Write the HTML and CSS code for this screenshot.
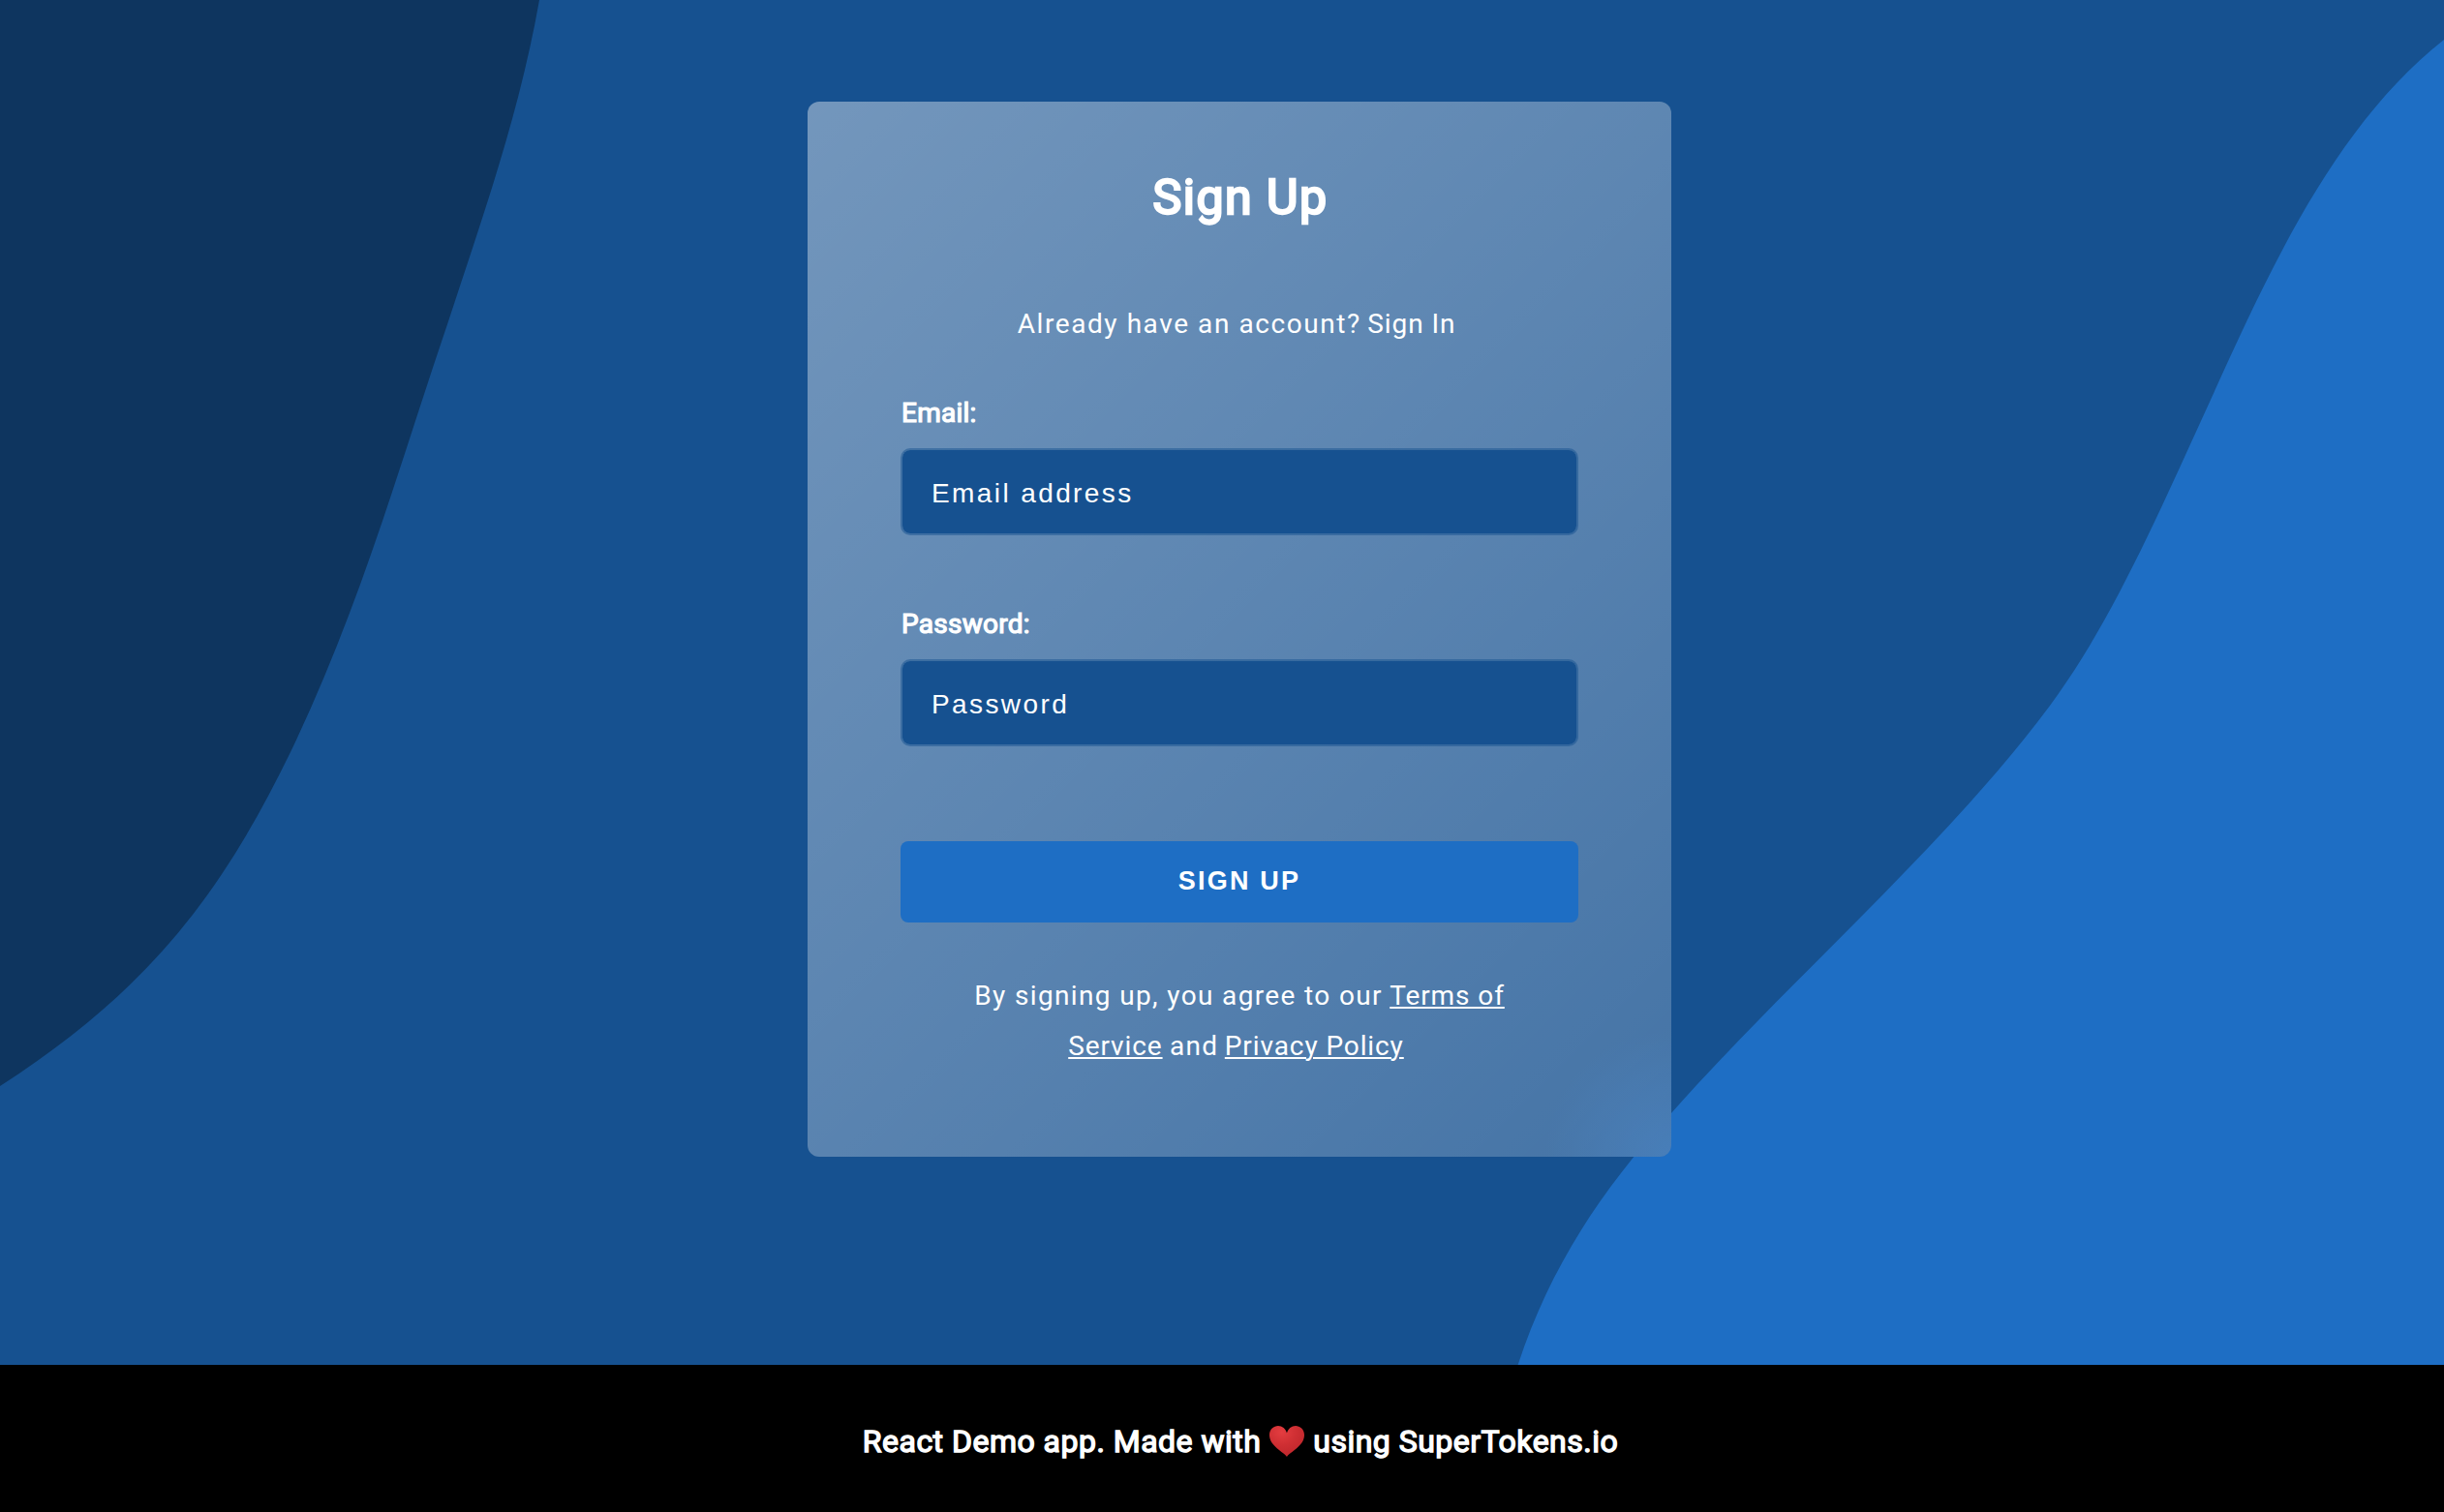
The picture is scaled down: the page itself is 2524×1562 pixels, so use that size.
FILE: index.html
```html
<!DOCTYPE html>
<html lang="en">
<head>
<meta charset="utf-8">
<title>Sign Up</title>
<link rel="stylesheet" href="styles.css">
</head>
<body>
<div class="page">
  <main class="stage">
    <svg class="waves" viewBox="0 0 2524 1410" aria-hidden="true">
      <path class="wave-dark" d="M0 0H557C536 118 502 213 463 332C412 482 372 627 300 777C224 934 145 1028 0 1122Z"/>
      <path class="wave-light" d="M2524 41C2398 140 2328 316 2262 459C2216 560 2172 655 2117 729C2010 873 1850 1010 1726 1150C1650 1234 1600 1312 1567.6 1410H2524Z"/>
    </svg>
    <form class="card">
      <h1 class="title">Sign Up</h1>
      <p class="switch">Already have an account? <a class="link plain">Sign In</a></p>
      <label class="label" for="email">Email:</label>
      <input class="input" id="email" type="email" placeholder="Email address">
      <label class="label" for="password">Password:</label>
      <input class="input" id="password" type="password" placeholder="Password">
      <button class="submit" type="button">SIGN UP</button>
      <p class="terms">By signing up, you agree to our <a class="link">Terms of</a><br><a class="link">Service</a> <span class="and">and</span> <a class="link last">Privacy Policy</a></p>
    </form>
  </main>
  <footer class="footer">
    <span class="made">React Demo app. Made with</span>
    <svg class="heart" viewBox="0 0 36 32" aria-hidden="true">
      <defs>
        <radialGradient id="heart-fill" cx="0.35" cy="0.2" r="0.75">
          <stop offset="0" stop-color="#e43d40"/>
          <stop offset="0.55" stop-color="#cf2f33"/>
          <stop offset="1" stop-color="#c1282d"/>
        </radialGradient>
      </defs>
      <path fill="url(#heart-fill)" d="M18 32C15 27 0 21 0 9.500C0 3.500 4.500 0 9 0C13 0 17 3 18 7.500C19 3 23 0 27 0C31.500 0 36 3.500 36 9.500C36 21 21 27 18 32Z"/>
    </svg>
    <span class="using">using SuperTokens.io</span>
  </footer>
</div>
</body>
</html>
```
FILE: styles.css
```css
* {
  box-sizing: border-box;
}

body {
  margin: 0;
  font-family: Roboto, "Liberation Sans", sans-serif;
  color: #fff;
  background: #000;
}

.page {
  height: 1562px;
  overflow: hidden;
  display: flex;
  flex-direction: column;
}

.stage {
  position: relative;
  height: 1410px;
  padding: 105px 0 0 36px;
  display: flex;
  justify-content: center;
  align-items: flex-start;
  background: #165190;
}

.waves {
  position: absolute;
  inset: 0;
  width: 2524px;
  height: 1410px;
}

.wave-dark {
  fill: #0e355f;
}

.wave-light {
  fill: #1e6ec4;
}

.card {
  position: relative;
  width: 892px;
  height: 1090px;
  padding: 69px 96px 0;
  display: flex;
  flex-direction: column;
  border-radius: 12px;
  background:
    linear-gradient(135deg, rgba(255, 255, 255, 0.4), rgba(255, 255, 255, 0.2)),
    radial-gradient(circle 130px at 100% 100%, #1a5ea8, rgba(26, 94, 168, 0)),
    #165190;
}

.title {
  margin: 0;
  padding-left: 2px;
  font-size: 50px;
  line-height: 60px;
  font-weight: 400;
  letter-spacing: 1.500px;
  -webkit-text-stroke: 2.500px #fff;
  text-align: center;
}

.switch {
  margin: 75px 6px 0 0;
  font-size: 28px;
  line-height: 52px;
  letter-spacing: 1.570px;
  text-align: center;
}

.label {
  margin-top: 46px;
  padding-left: 1px;
  font-size: 28px;
  line-height: 40px;
  font-weight: 400;
  letter-spacing: 0.250px;
  -webkit-text-stroke: 1.200px #fff;
}

.input {
  height: 90px;
  margin-top: 16px;
  padding: 4px 30px 0;
  font-family: "Liberation Sans", Arial, sans-serif;
  font-size: 28px;
  letter-spacing: 2.400px;
  color: #fff;
  background: #165190;
  background-clip: padding-box;
  border: 2px solid rgba(22, 81, 144, 0.5);
  border-radius: 10px;
}

.input::placeholder {
  color: #fff;
  opacity: 1;
}

.input + .label {
  margin-top: 72px;
}

.submit {
  height: 84px;
  margin-top: 98px;
  padding: 0 0 2px;
  font-family: "Liberation Sans", Arial, sans-serif;
  font-size: 27px;
  font-weight: 700;
  letter-spacing: 2.200px;
  color: #fff;
  background: #1e6ec4;
  border: 0;
  border-radius: 8px;
}

.terms {
  margin: 50px 0 0;
  font-size: 28px;
  line-height: 52px;
  letter-spacing: 1.360px;
  text-align: center;
}

.and {
  margin: 0 -1px;
}

.link {
  margin-left: -1px;
  letter-spacing: 0.900px;
  color: #fff;
  text-decoration: underline;
  text-decoration-thickness: 2px;
  text-underline-offset: 2px;
}

.link.plain {
  margin-left: -2px;
  text-decoration: none;
}

.link.last {
  margin-right: 6px;
}

.footer {
  height: 152px;
  padding: 6px 0 0 38px;
  display: flex;
  justify-content: center;
  align-items: center;
  gap: 9px;
  font-size: 32px;
  line-height: 40px;
  letter-spacing: 0.480px;
  -webkit-text-stroke: 1.400px #fff;
  background: #000;
}

.heart {
  width: 36px;
  height: 32px;
}
```
